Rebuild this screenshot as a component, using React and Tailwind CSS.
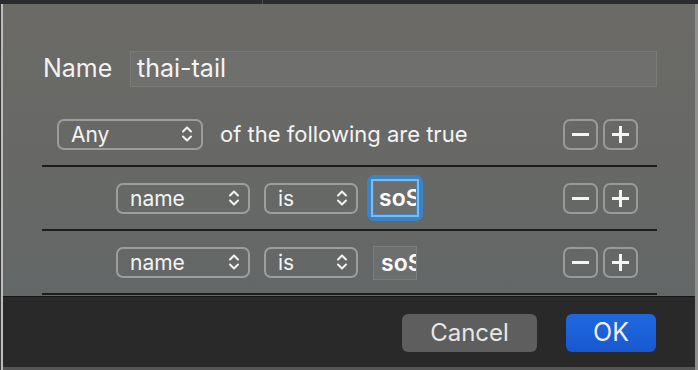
const font = { fontFamily: 'Inter, "Liberation Sans", sans-serif' };

function Chevrons() {
  return (
    <svg width="12" height="20" viewBox="0 0 12 20" fill="none" stroke="#f2f2f2" strokeWidth="2" strokeLinecap="round" strokeLinejoin="round">
      <path d="M2 7.5 L6 3.5 L10 7.5" />
      <path d="M2 12.5 L6 16.5 L10 12.5" />
    </svg>
  );
}

function Select({ label, width }) {
  return (
    <div className={`${width} h-[31px] shrink-0 rounded-[7px] border-2 border-[#9d9d9d] flex items-center justify-between pl-[12px] pr-[8px]`}>
      <span className="text-[21px] leading-none text-[#f4f4f4]">{label}</span>
      <Chevrons />
    </div>
  );
}

function StepButtons() {
  return (
    <div className="ml-auto flex gap-[5px]">
      <div className="w-[35px] h-[31px] rounded-[7px] border-2 border-[#9a9a9a] flex items-center justify-center">
        <svg width="17" height="17" viewBox="0 0 17 17"><rect x="0" y="7" width="17" height="3" fill="#f4f4f4" /></svg>
      </div>
      <div className="w-[35px] h-[31px] rounded-[7px] border-2 border-[#9a9a9a] flex items-center justify-center">
        <svg width="17" height="17" viewBox="0 0 17 17"><rect x="0" y="7" width="17" height="3" fill="#f4f4f4" /><rect x="7" y="0" width="3" height="17" fill="#f4f4f4" /></svg>
      </div>
    </div>
  );
}

function ValueField({ focused }) {
  if (!focused) {
    return (
      <div className="ml-[15px] mt-[2px] w-[44px] h-[34px] overflow-hidden bg-[#6d6e6e] border border-[#7c7d7d] flex items-center pl-[7px]">
        <span className="text-[23px] font-semibold leading-none text-white whitespace-nowrap">soS</span>
      </div>
    );
  }
  return (
    <div className="ml-[9px] p-[4px] rounded-[7px] bg-[#3a83c4]">
      <div className="w-[48px] h-[38px] border-2 border-[#7fbaea] p-[1px]">
        <div className="w-full h-full overflow-hidden bg-[#6d6e6e] flex items-center pl-[5px]">
          <span className="text-[23px] font-semibold leading-none text-white whitespace-nowrap">soS</span>
        </div>
      </div>
    </div>
  );
}

function RuleRow({ focused }) {
  return (
    <div className="h-[64px] border-b-2 border-[#1c1c1c] flex items-center pl-[74px] pr-[19px]">
      <Select label="name" width="w-[134px]" />
      <div className="ml-[14px]"><Select label="is" width="w-[94px]" /></div>
      <ValueField focused={focused} />
      <StepButtons />
    </div>
  );
}

export default function App() {
  return (
    <div style={font} className="w-[698px] h-[370px] overflow-hidden flex flex-col bg-[#2a2b2e]">
      <div className="h-[4px] flex shrink-0">
        <div className="w-[263px] bg-[#2b2c30] border-r border-[#4a4b4f]" />
        <div className="flex-1 bg-[#2b2c30]" />
      </div>
      <div className="flex-1 flex">
        <div className="w-[1px] bg-[#3a3a3a]" />
        <div className="w-[2px] bg-[#bdbdbd]" />
        <div className="flex-1 flex flex-col">
          <div className="flex-1 flex flex-col bg-gradient-to-b from-[#6b6a66] to-[#646767]">
            <div className="h-[99px] flex items-start pl-[40px] pr-[38px] pt-[47px]">
              <div className="w-[87px] h-[36px] flex items-center">
                <span className="text-[25px] text-[#f2f2f2]">Name</span>
              </div>
              <div className="flex-1 h-[36px] bg-[#6f6f6d] border border-[#7a7a78] flex items-center pl-[6px]">
                <span className="text-[25px] text-[#f4f4f4]">thai-tail</span>
              </div>
            </div>
            <div className="ml-[39px] mr-[38px]">
              <div className="h-[64px] border-b-2 border-[#1c1c1c] flex items-center pl-[15px] pr-[19px]">
                <Select label="Any" width="w-[146px]" />
                <span className="ml-[17px] text-[22px] text-[#f4f4f4]">of the following are true</span>
                <StepButtons />
              </div>
              <RuleRow focused />
              <RuleRow />
            </div>
          </div>
          <div className="h-[71px] shrink-0 bg-[#292929] border-t border-[#161616] flex items-center justify-end gap-[29px] pr-[39px] pt-[1px]">
            <div className="w-[135px] h-[38px] rounded-[6px] bg-[#5e5e5e] flex items-center justify-center">
              <span className="text-[24px] text-[#e6e6e6]">Cancel</span>
            </div>
            <div className="w-[90px] h-[38px] rounded-[6px] bg-gradient-to-b from-[#2068e0] to-[#1858cf] flex items-center justify-center">
              <span className="text-[25px] text-[#f0f0f0]">OK</span>
            </div>
          </div>
          <div className="h-[3px] shrink-0 bg-[#555555]" />
        </div>
        <div className="w-[3px] bg-[#8f8f8f]" />
      </div>
    </div>
  );
}
